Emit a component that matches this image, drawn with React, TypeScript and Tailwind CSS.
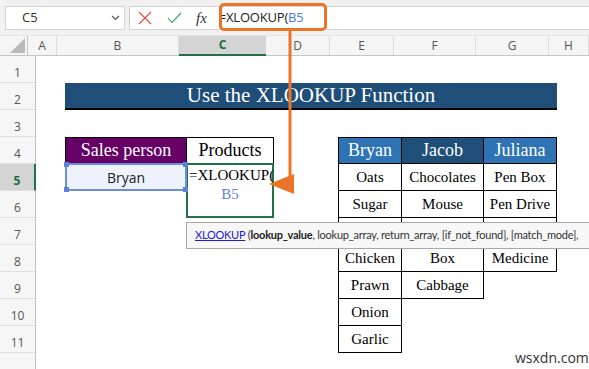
import React from "react";

const colHeads = [
  { l: "A", w: "w-[29px]" },
  { l: "B", w: "w-[122px]" },
  { l: "C", w: "w-[87px]", active: true },
  { l: "D", w: "w-[64px]" },
  { l: "E", w: "w-[64px]" },
  { l: "F", w: "w-[82px]" },
  { l: "G", w: "w-[73px]" },
  { l: "H", w: "w-[40px]" },
];

const rows = [1, 2, 3, 4, 5, 6, 7, 8, 9, 10, 11, 12];

// second table, one entry per column (row 7 sits under the tooltip)
const people = [
  { name: "Bryan", col: "col-start-5", head: "bg-[#2e74b5]", items: ["Oats", "Sugar", "", "Chicken", "Prawn", "Onion", "Garlic"] },
  { name: "Jacob", col: "col-start-6", head: "bg-[#1f4e79]", items: ["Chocolates", "Mouse", "", "Box", "Cabbage"] },
  { name: "Juliana", col: "col-start-7", head: "bg-[#2e74b5]", items: ["Pen Box", "Pen Drive", "", "Medicine"] },
];

const rowStart = [
  "row-start-4",
  "row-start-5",
  "row-start-6",
  "row-start-7",
  "row-start-8",
  "row-start-9",
  "row-start-10",
  "row-start-11",
];

const serif = "font-['Liberation_Serif',serif]";

export default function App() {
  return (
    <div className="relative w-[589px] h-[369px] overflow-hidden bg-white font-['Open_Sans',sans-serif]">
      {/* formula bar */}
      <div className="h-[36px] bg-[#f1f1f1] flex items-start pt-[6px] pl-[5px] border-b border-[#e4e4e4]">
        <div className="w-[120px] h-[24px] bg-white border border-[#d4d4d4] flex items-center justify-between pl-[16px] pr-[4px] text-[13px] text-[#333]">
          <span>C5</span>
          <svg width="9" height="6" viewBox="0 0 9 6">
            <path d="M1 1 L4.5 4.5 L8 1" stroke="#555" strokeWidth="1.1" fill="none" />
          </svg>
        </div>
        <div className="ml-[4px] flex-1 h-[24px] bg-white border-y border-l border-[#d4d4d4] flex items-center">
          <div className="w-px h-[14px] bg-[#c8c8c8] ml-[-1px]" />
          <svg className="ml-[8px]" width="14" height="14" viewBox="0 0 14 14">
            <path d="M1 1 L13 13 M13 1 L1 13" stroke="#e0474c" strokeWidth="1.1" />
          </svg>
          <svg className="ml-[15px]" width="15" height="12" viewBox="0 0 15 12">
            <path d="M1 6 L5 10.5 L14 1" stroke="#3d9a63" strokeWidth="1.1" fill="none" />
          </svg>
          <span className={`ml-[14px] italic text-[15px] text-[#333] ${serif}`}>fx</span>
          <span className="ml-[12px] text-[13px] text-[#222] tracking-[-0.2px]">
            =XLOOKUP(<span className="text-[#4d7bd6]">B5</span>
          </span>
        </div>
      </div>

      {/* column headers */}
      <div className="h-[20px] flex bg-[#f5f5f5] border-b border-[#c6c6c6]">
        <div className="w-[36px] relative border-r border-[#c6c6c6]">
          <svg className="absolute right-[2px] bottom-[2px]" width="15" height="15" viewBox="0 0 15 15">
            <path d="M15 0 L15 15 L0 15 Z" fill="#b9b9b9" />
          </svg>
        </div>
        {colHeads.map((c) => (
          <div
            key={c.l}
            className={`${c.w} shrink-0 flex items-center justify-center text-[12px] ${
              c.active
                ? "bg-[#d4d4d4] text-[#1e6e42] font-bold border-b-2 border-[#217346] -mb-px"
                : "text-[#555] border-r border-[#dcdcdc]"
            }`}
          >
            {c.l}
          </div>
        ))}
      </div>

      {/* sheet body */}
      <div className="flex">
        <div className="w-[36px] shrink-0 flex flex-col border-r border-[#c0c0c0] bg-[#f6f6f6]">
          {rows.map((r) => (
            <div
              key={r}
              className={`h-[27px] shrink-0 flex justify-center pt-[9px] leading-[16px] text-[12px] border-b border-[#e0e0e0] ${
                r === 5
                  ? "bg-[#d4d4d4] text-[#1e6e42] font-bold border-r-2 border-r-[#217346] -mr-px"
                  : "text-[#555]"
              }`}
            >
              {r < 12 ? r : ""}
            </div>
          ))}
        </div>

        <div className="grid grid-cols-[29px_122px_87px_64px_64px_82px_73px_40px] grid-rows-[repeat(12,27px)]">
          {/* title */}
          <div
            className={`col-start-2 col-end-8 row-start-2 bg-[#1f4e79] border-b-2 border-black flex items-center justify-center text-white text-[21px] ${serif}`}
          >
            Use the XLOOKUP Function
          </div>

          {/* first table */}
          <div
            className={`col-start-2 row-start-4 bg-[#660066] border border-black flex items-center justify-center text-white text-[18px] ${serif}`}
          >
            Sales person
          </div>
          <div
            className={`col-start-3 row-start-4 border-y border-r border-black flex items-center justify-center text-black text-[18px] ${serif}`}
          >
            Products
          </div>
          <div className="col-start-2 row-start-5 relative -mt-px bg-[#edf2fc] border-2 border-[#6b8fdb] flex items-center justify-center text-[14px] text-[#222]">
            Bryan
            <span className="absolute -left-[3px] -top-[3px] w-[5px] h-[5px] bg-[#5b81d8]" />
            <span className="absolute -right-[3px] -top-[3px] w-[5px] h-[5px] bg-[#5b81d8]" />
            <span className="absolute -left-[3px] -bottom-[3px] w-[5px] h-[5px] bg-[#5b81d8]" />
            <span className="absolute -right-[3px] -bottom-[3px] w-[5px] h-[5px] bg-[#5b81d8]" />
          </div>
          <div
            className={`col-start-3 row-start-5 row-span-2 -mt-px -ml-px bg-white border-2 border-[#217346] flex flex-col items-center pt-[1px] leading-[19px] text-[15px] ${serif}`}
          >
            <span className="text-black self-start pl-[1px]">=XLOOKUP(</span>
            <span className="text-[#5b7fd6]">B5</span>
          </div>

          {/* second table */}
          {people.map((p) => (
            <React.Fragment key={p.name}>
              <div
                className={`${p.col} row-start-4 ${p.head} border-y border-r border-black ${
                  p.name === "Bryan" ? "border-l" : ""
                } flex items-center justify-center text-white text-[18px] ${serif}`}
              >
                {p.name}
              </div>
              {p.items.map((it, i) => (
                <div
                  key={`${p.name}-${i}`}
                  className={`${p.col} ${rowStart[i + 1]} border-b border-r border-black ${
                    p.name === "Bryan" ? "border-l" : ""
                  } flex items-center justify-center text-black text-[15px] ${serif}`}
                >
                  {it}
                </div>
              ))}
            </React.Fragment>
          ))}
        </div>
      </div>

      {/* orange callout */}
      <div className="absolute left-[219px] top-[3px] w-[108px] h-[28px] border-[3px] border-[#ec7429] rounded-[5px]" />
      <svg className="absolute left-0 top-0" width="589" height="369" viewBox="0 0 589 369">
        <path d="M290 31 L290 181" stroke="#ec7429" strokeWidth="3" fill="none" />
        <path d="M269 184 L294 174 L294 194 Z" fill="#ec7429" />
      </svg>

      {/* function tooltip */}
      <div className="absolute left-[186px] top-[222px] w-[430px] h-[27px] bg-[#f7f7f7] border border-[#a8a8a8] flex items-center pl-[8px] whitespace-nowrap font-['Lato',sans-serif] text-[11px] tracking-[-0.25px] text-[#333]">
        <span className="text-[#1a1ae0] underline">XLOOKUP</span>
        <span>&nbsp;(</span>
        <b className="text-[#222]">lookup_value</b>
        <span>, lookup_array, return_array, [if_not_found], [match_mode],</span>
      </div>

      <div className="absolute left-[515px] top-[349px] text-[14px] text-[#333] leading-[18px]">wsxdn.com</div>
    </div>
  );
}
